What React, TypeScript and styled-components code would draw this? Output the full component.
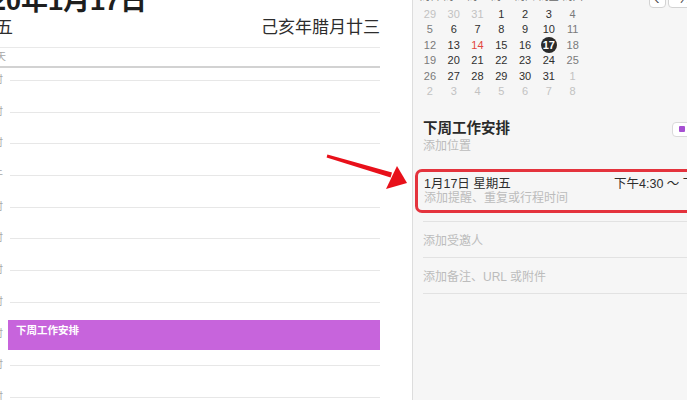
import React from 'react';

import styled, { createGlobalStyle } from 'styled-components';

type DayKind = 'normal' | 'weekend' | 'other' | 'today' | 'selected';

interface MiniDay {
  label: number;
  kind: DayKind;
}

const WEEKDAYS = ['周日', '周一', '周二', '周三', '周四', '周五', '周六'];

const HOURS = [
  '上午9时',
  '上午10时',
  '上午11时',
  '中午',
  '下午1时',
  '下午2时',
  '下午3时',
  '下午4时',
  '下午5时',
  '下午6时',
  '下午7时',
];

// builds the six week rows of the month grid
const buildMonth = (): MiniDay[] => {
  const days: MiniDay[] = [];
  const push = (label: number, other = false) => {
    const col = days.length % 7;
    let kind: DayKind = col === 0 || col === 6 ? 'weekend' : 'normal';
    if (other) kind = 'other';
    if (!other && label === 14) kind = 'today';
    if (!other && label === 17) kind = 'selected';
    days.push({ label, kind });
  };
  [29, 30, 31].forEach((d) => push(d, true));
  for (let d = 1; d <= 31; d++) push(d);
  for (let d = 1; d <= 8; d++) push(d, true);
  return days;
};

const App: React.FC = () => {
  const month = buildMonth();

  return (
    <>
      <GlobalStyle />
      <Shell>
        <DayPane>
          <DayInner>
            <Title>2020年1月17日</Title>
            <SubRow>
              <span>星期五</span>
              <span>己亥年腊月廿三</span>
            </SubRow>
            <AllDayRow>
              <HourLabel $allDay>全天</HourLabel>
            </AllDayRow>
            <Hours>
              {HOURS.map((hour) => (
                <HourRow key={`hour-${hour}`}>
                  <HourLabel>{hour}</HourLabel>
                  <HourLine />
                </HourRow>
              ))}
              <EventBlock>下周工作安排</EventBlock>
            </Hours>
          </DayInner>
        </DayPane>

        <SidePane>
          <MiniCal>
            <TopRow>
              <WeekHeader>
                {WEEKDAYS.map((w) => (
                  <span key={`wd-${w}`}>{w}</span>
                ))}
              </WeekHeader>
              <NavGroup>
                <NavButton>‹</NavButton>
                <NavButton $wide>今天</NavButton>
              </NavGroup>
            </TopRow>
            <DaysGrid>
              {month.map((day, index) => (
                <DayCell key={`day-${index}`} $kind={day.kind}>
                  <span>{day.label}</span>
                </DayCell>
              ))}
            </DaysGrid>
          </MiniCal>

          <Details>
            <TitleRow>
              <EventTitle>下周工作安排</EventTitle>
              <Swatch>
                <i />
              </Swatch>
            </TitleRow>
            <Placeholder>添加位置</Placeholder>

            <HighlightBox>
              <TimeRow>
                <span>1月17日 星期五</span>
                <span>下午4:30 ～ 下午5:30</span>
              </TimeRow>
              <Placeholder>添加提醒、重复或行程时间</Placeholder>
            </HighlightBox>

            <FieldRow>添加受邀人</FieldRow>
            <FieldRow $last>添加备注、URL 或附件</FieldRow>
          </Details>
        </SidePane>

        <Arrow viewBox="0 0 100 45" aria-hidden>
          <polygon points="7.4,4.4 72,22.4 70.6,27.6 6.6,7.6" />
          <polygon points="77,16 87,33 66,39" />
        </Arrow>
      </Shell>
    </>
  );
};

const GlobalStyle = createGlobalStyle`
  html, body {
    margin: 0;
    padding: 0;
    overflow: hidden;
    background: #ffffff;
  }

  body {
    font-family: 'Liberation Sans', 'Noto Sans CJK SC', sans-serif;
    color: #2b2b2b;
  }
`;

const Shell = styled.div`
  position: relative;
  display: flex;
  width: 687px;
  height: 400px;
  overflow: hidden;
`;

const DayPane = styled.div`
  flex: 0 0 412px;
  box-sizing: border-box;
  padding-right: 32px;
  overflow: hidden;
  background: #ffffff;
`;

const DayInner = styled.div`
  margin: -16px 0 0 -40px;
`;

const Title = styled.div`
  padding-left: 1px;
  font-size: 27px;
  font-weight: 700;
  line-height: 34px;
  color: #1e1e1e;
  white-space: nowrap;
`;

const SubRow = styled.div`
  display: flex;
  justify-content: space-between;
  margin-top: -1px;
  padding-left: 2px;
  font-size: 17px;
  line-height: 22px;
  color: #2d2d2d;
  white-space: nowrap;
`;

const AllDayRow = styled.div`
  display: grid;
  grid-template-columns: 46px 1fr;
  align-items: center;
  height: 18px;
  margin-top: 8px;
  border-top: 1px solid #e9e9e9;
  border-bottom: 2px solid #d2d2d2;
`;

const HourLabel = styled.span<{ $allDay?: boolean }>`
  margin-top: ${(props) => (props.$allDay ? '0' : '-6px')};
  font-size: 10px;
  line-height: 12px;
  color: #a8a8a8;
  text-align: right;
  white-space: nowrap;
`;

const Hours = styled.div`
  position: relative;
  margin-top: 12px;
`;

const HourRow = styled.div`
  display: grid;
  grid-template-columns: 43px 1fr;
  column-gap: 7px;
  height: 31.7px;
`;

const HourLine = styled.div`
  border-top: 1px solid #e7e7e7;
`;

const EventBlock = styled.div`
  position: absolute;
  top: 240px;
  left: 48px;
  right: 0;
  height: 30px;
  box-sizing: border-box;
  padding: 3px 8px;
  background: #c764dc;
  color: #ffffff;
  font-size: 10.5px;
  font-weight: 700;
  line-height: 14px;
`;

const SidePane = styled.div`
  flex: 1;
  min-width: 0;
  overflow: hidden;
  background: #f6f6f6;
  border-left: 1px solid #dddddd;
`;

const MiniCal = styled.div`
  margin-top: -12px;
  padding-left: 5px;
`;

const TopRow = styled.div`
  display: flex;
  height: 20px;
`;

const WeekHeader = styled.div`
  display: grid;
  grid-template-columns: repeat(7, 23.8px);
  align-self: flex-start;
  font-size: 10px;
  line-height: 18px;
  color: #666666;
  text-align: center;
  white-space: nowrap;
`;

const NavGroup = styled.div`
  display: flex;
  gap: 2px;
  align-self: flex-end;
  margin-left: 64px;
`;

const NavButton = styled.div<{ $wide?: boolean }>`
  width: ${(props) => (props.$wide ? '38px' : '17px')};
  height: 18px;
  box-sizing: border-box;
  background: #ffffff;
  border: 1px solid #d3d3d3;
  border-radius: 4px;
  font-size: ${(props) => (props.$wide ? '11px' : '15px')};
  line-height: 15px;
  color: #444444;
  text-align: center;
`;

const DaysGrid = styled.div`
  display: grid;
  grid-template-columns: repeat(7, 23.8px);
  grid-auto-rows: 15.5px;
  margin-top: -2px;
`;

const dayColors: Record<DayKind, string> = {
  normal: '#2f2f2f',
  weekend: '#7a7a7a',
  other: '#c2c2c2',
  today: '#e2463e',
  selected: '#ffffff',
};

const DayCell = styled.div<{ $kind: DayKind }>`
  display: flex;
  align-items: center;
  justify-content: center;
  font-size: 11px;
  font-weight: 500;
  color: ${(props) => dayColors[props.$kind]};

  span {
    display: flex;
    align-items: center;
    justify-content: center;
    width: 16px;
    height: 16px;
    border-radius: 50%;
    background: ${(props) =>
      props.$kind === 'selected' ? '#2a2a2a' : 'transparent'};
    font-weight: ${(props) => (props.$kind === 'selected' ? 700 : 500)};
  }
`;

const Details = styled.div`
  padding-left: 10px;
`;

const TitleRow = styled.div`
  display: flex;
  align-items: center;
  margin-top: 19px;
`;

const EventTitle = styled.div`
  font-size: 14.5px;
  font-weight: 600;
  line-height: 20px;
  color: #2a2a2a;
`;

const Swatch = styled.div`
  display: flex;
  align-items: center;
  width: 26px;
  height: 15px;
  box-sizing: border-box;
  margin: 2px -11px 0 auto;
  padding-left: 6px;
  background: #ffffff;
  border: 1px solid #dadada;
  border-radius: 4px;

  i {
    width: 6px;
    height: 6px;
    border-radius: 1px;
    background: #a650d2;
  }
`;

const Placeholder = styled.div`
  font-size: 12px;
  line-height: 16px;
  color: #bcbcbc;
  white-space: nowrap;
`;

const HighlightBox = styled.div`
  width: 330px;
  box-sizing: border-box;
  margin: 15px 0 0 -8px;
  padding: 5px 0 5px 6px;
  border: 3px solid #e4333d;
  border-radius: 7px;

  ${Placeholder} {
    line-height: 14px;
  }
`;

const TimeRow = styled.div`
  display: grid;
  grid-template-columns: 190px 1fr;
  font-size: 12.5px;
  line-height: 14px;
  color: #2e2e2e;
  white-space: nowrap;
`;

const FieldRow = styled.div<{ $last?: boolean }>`
  display: flex;
  align-items: center;
  height: 35px;
  margin-top: ${(props) => (props.$last ? '0' : '8px')};
  border-top: 1px solid #e2e2e2;
  border-bottom: ${(props) => (props.$last ? '1px solid #e2e2e2' : 'none')};
  font-size: 12px;
  color: #bcbcbc;
  white-space: nowrap;
`;

const Arrow = styled.svg`
  position: absolute;
  left: 320px;
  top: 150px;
  width: 100px;
  height: 45px;
  fill: #e8101a;
`;

export default App;
